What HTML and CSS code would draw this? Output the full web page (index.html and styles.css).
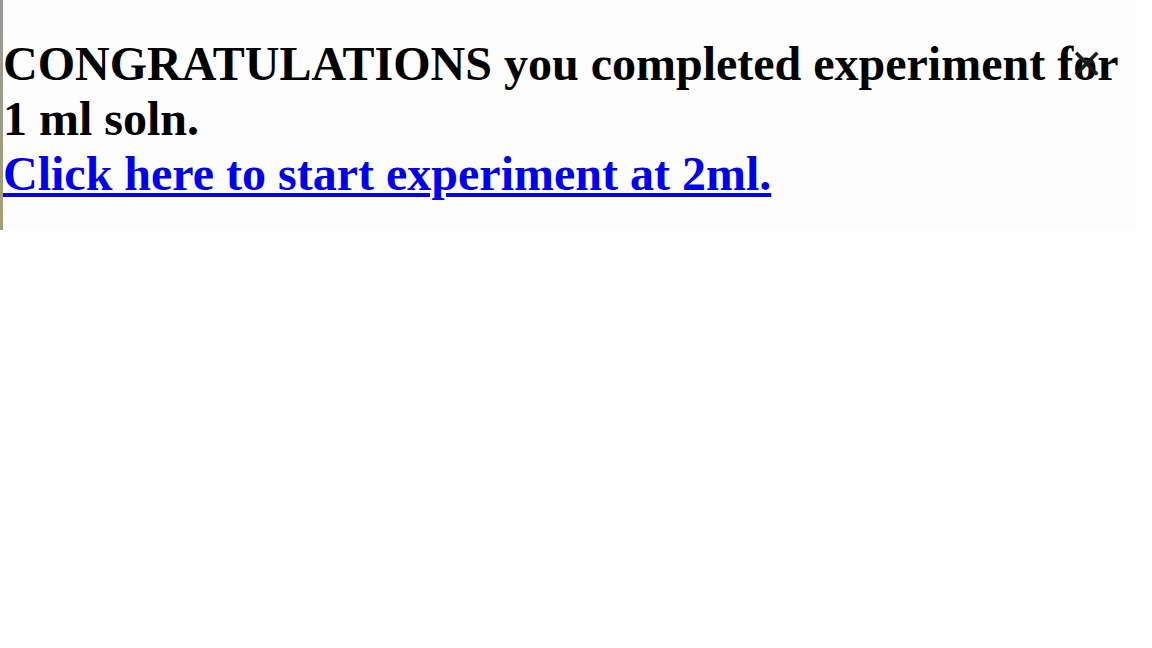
FILE: index.html
```html
<!DOCTYPE html>
<html>
<head>
<meta charset="utf-8">
<link rel="stylesheet" href="styles.css">
</head>
<body>
<div class="panel">
  <div class="message">
    <div class="line">CONGRATULATIONS you completed experiment for 1 ml soln.</div>
    <a class="link" href="#">Click here to start experiment at 2ml.</a>
  </div>
  <span class="close">×</span>
</div>
</body>
</html>
```

FILE: styles.css
```css
html, body {
  margin: 0;
  padding: 0;
  background: #ffffff;
}
.panel {
  position: relative;
  width: 1135px;
  height: 230px;
  box-sizing: border-box;
  background: #fdfdfd;
  border-image: linear-gradient(#999999, #a39e72) 1;
  border-style: solid;
  border-width: 0 0 0 3px;
  padding-top: 36px;
}
.message {
  font-family: "Liberation Serif", "Times New Roman", serif;
  font-weight: bold;
  font-size: 48px;
  line-height: 55px;
  color: #000;
}
.link {
  color: #0000ee;
  text-decoration: underline;
}
.close {
  position: absolute;
  left: 1066px;
  top: 42px;
  font-family: "DejaVu Sans", sans-serif;
  font-size: 42px;
  line-height: 1;
  color: #1a1a1a;
}
```
